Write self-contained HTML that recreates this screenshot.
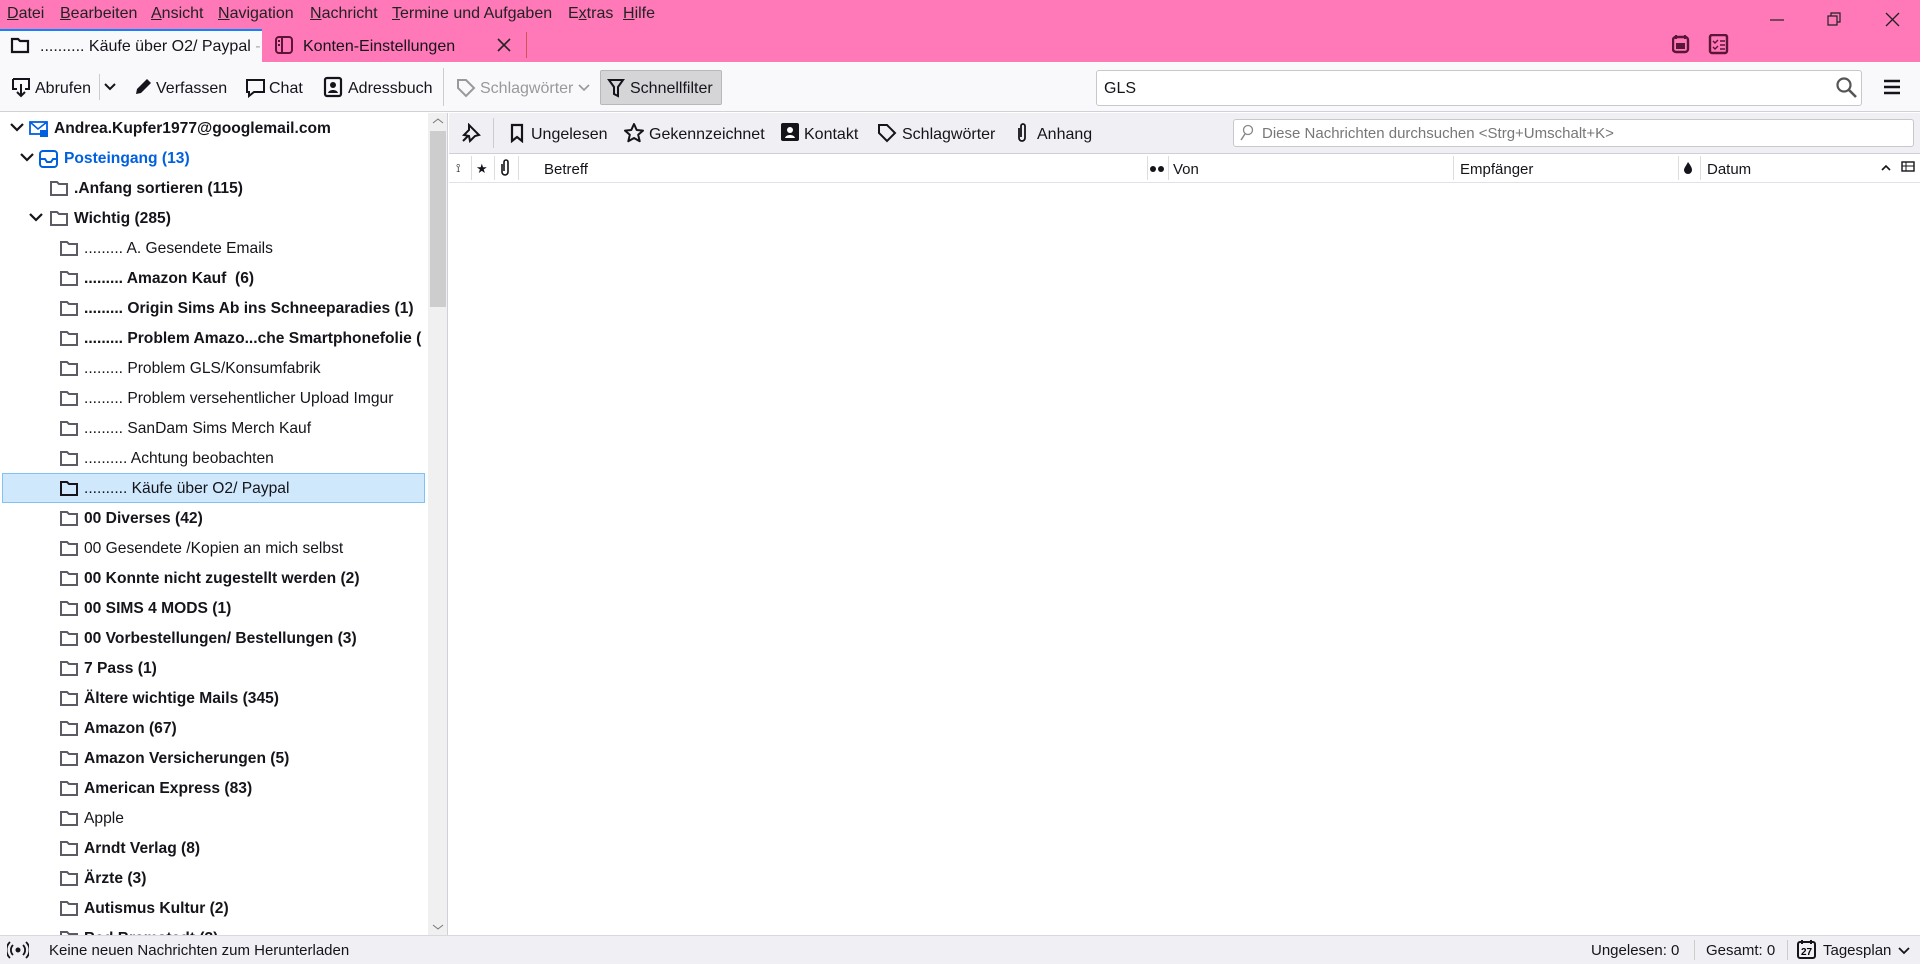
<!DOCTYPE html>
<html><head><meta charset="utf-8"><style>
*{box-sizing:border-box;margin:0;padding:0}
body{width:1920px;height:964px;overflow:hidden;font-family:"Liberation Sans",sans-serif;font-size:15px;color:#15141a;background:#fff;position:relative}
.a{position:absolute;white-space:nowrap}
svg{position:absolute}
#menu{left:0;top:0;width:1920px;height:62px;background:#ff78b8}
.m{top:5px;font-size:16px;color:#222}
.m u{text-decoration:underline}
#tab1{left:0;top:29px;width:262px;height:34px;background:#f9f9fb;border-top:2px solid #0a84ff}
#tb{left:0;top:63px;width:1920px;height:49px;background:#f9f9fb;border-bottom:1px solid #d0d0d7}
.t{top:80px;font-size:16px}
#fp{left:0;top:113px;width:448px;height:822px;background:#fff;border-right:1px solid #d0d0d7;overflow:hidden}
.r{position:absolute;height:30px;line-height:31px;white-space:nowrap;font-size:15.6px}
.b{font-weight:bold}
#qf{left:449px;top:113px;width:1471px;height:41px;background:#f0f0f4;border-bottom:1px solid #cfcfd8}
.q{top:126px;font-size:16px}
#ch{left:449px;top:154px;width:1471px;height:29px;background:#fff;border-bottom:1px solid #e0e0e6}
.c{top:161px;font-size:15px}
#sb{left:0;top:935px;width:1920px;height:29px;background:#f0f0f4;border-top:1px solid #d8d8de}
.s{top:942px;font-size:15px}
</style></head><body>
<div id="menu" class="a"></div>
<div class="a m" style="left:7px"><u>D</u>atei</div>
<div class="a m" style="left:60px"><u>B</u>earbeiten</div>
<div class="a m" style="left:151px"><u>A</u>nsicht</div>
<div class="a m" style="left:218px"><u>N</u>avigation</div>
<div class="a m" style="left:310px"><u>N</u>achricht</div>
<div class="a m" style="left:392px"><u>T</u>ermine und Aufgaben</div>
<div class="a m" style="left:568px">E<u>x</u>tras</div>
<div class="a m" style="left:623px"><u>H</u>ilfe</div>
<svg style="left:1768px;top:12px" width="150" height="16"><path d="M2 8h14" stroke="#222" stroke-width="1.2"/><path d="M60 4h9v9h-9zM63 4v-3h9v9h-3" stroke="#222" fill="none" stroke-width="1.2"/><path d="M118 1l13 13M131 1l-13 13" stroke="#222" stroke-width="1.3"/></svg>
<svg style="left:1672px;top:34px" width="60" height="22"><rect x="1" y="3" width="15" height="15" rx="3" fill="none" stroke="#5a1538" stroke-width="2.4"/><path d="M4 1v4M13 1v4" stroke="#5a1538" stroke-width="2"/><rect x="4" y="9" width="9" height="6" fill="#5a1538"/><rect x="38" y="1" width="17" height="18" rx="2" fill="none" stroke="#5a1538" stroke-width="2.4"/><path d="M41 7l2 2 3-3M41 13l2 2 3-3M48 7h5M48 11h5M48 15h5" stroke="#5a1538" stroke-width="1.4" fill="none"/></svg>
<div id="tab1" class="a"></div>
<svg style="left:10px;top:36px" width="20" height="18"><path d="M2 3h6l2 2h8v11H2z" fill="none" stroke="#15141a" stroke-width="2.2"/></svg>
<div class="a" style="left:40px;top:38px;font-size:16px">.......... Käufe über O2/ Paypal <span style="color:#aaa">-</span></div>
<svg style="left:274px;top:35px" width="20" height="20"><rect x="2" y="2" width="16" height="16" rx="3" fill="none" stroke="#5a1538" stroke-width="2"/><path d="M8 2v16M4 6h2M4 10h2" stroke="#5a1538" stroke-width="2"/></svg>
<div class="a" style="left:303px;top:38px;font-size:16px">Konten-Einstellungen</div>
<svg style="left:497px;top:38px" width="14" height="14"><path d="M1 1l12 12M13 1L1 13" stroke="#222" stroke-width="1.6"/></svg>
<div class="a" style="left:526px;top:32px;width:1px;height:26px;background:#c55"></div>

<div id="tb" class="a"></div>
<svg style="left:10px;top:76px" width="22" height="22"><path d="M3 3h16v10h-4M7 13H3V3M11 8v12M7 16l4 4 4-4" fill="none" stroke="#15141a" stroke-width="2"/></svg>
<div class="a t" style="left:35px">Abrufen</div>
<div class="a" style="left:99px;top:74px;width:1px;height:26px;background:#ccc"></div>
<svg style="left:104px;top:82px" width="12" height="10"><path d="M1 2l5 5 5-5" stroke="#15141a" stroke-width="2" fill="none"/></svg>
<svg style="left:133px;top:77px" width="20" height="20"><path d="M3 17l1-5L14 2l4 4L8 16z" fill="#15141a"/></svg>
<div class="a t" style="left:156px">Verfassen</div>
<svg style="left:245px;top:78px" width="22" height="20"><path d="M2 2h17v12H9l-5 4v-4H2z" fill="none" stroke="#15141a" stroke-width="2"/></svg>
<div class="a t" style="left:269px">Chat</div>
<svg style="left:322px;top:76px" width="22" height="22"><rect x="3" y="2" width="16" height="18" rx="2" fill="none" stroke="#15141a" stroke-width="2.2"/><circle cx="11" cy="9" r="3" fill="#15141a"/><path d="M6 17c1-4 9-4 10 0z" fill="#15141a"/></svg>
<div class="a t" style="left:348px">Adressbuch</div>
<div class="a" style="left:443px;top:68px;width:1px;height:38px;background:#ccc"></div>
<svg style="left:456px;top:78px" width="20" height="20"><path d="M2 2h8l8 8-8 8-8-8z" fill="none" stroke="#999" stroke-width="2"/></svg>
<div class="a t" style="left:480px;color:#999">Schlagwörter</div>
<svg style="left:578px;top:84px" width="12" height="8"><path d="M1 1l5 5 5-5" stroke="#999" stroke-width="1.6" fill="none"/></svg>
<div class="a" style="left:600px;top:70px;width:122px;height:35px;background:#d5d5d8;border:1px solid #b8b8bc;border-radius:2px"></div>
<svg style="left:607px;top:78px" width="18" height="20"><path d="M2 2h14l-5 7v9l-4-2V9z" fill="none" stroke="#15141a" stroke-width="2"/></svg>
<div class="a t" style="left:630px">Schnellfilter</div>
<div class="a" style="left:1096px;top:70px;width:766px;height:36px;background:#fff;border:1px solid #c8c8cc;border-radius:3px"></div>
<div class="a" style="left:1104px;top:80px;font-size:16px">GLS</div>
<svg style="left:1835px;top:76px" width="24" height="24"><circle cx="9" cy="9" r="6.5" fill="none" stroke="#555" stroke-width="2.2"/><path d="M14 14l7 7" stroke="#555" stroke-width="2.6"/></svg>
<svg style="left:1883px;top:78px" width="18" height="18"><path d="M1 3h16M1 9h16M1 15h16" stroke="#15141a" stroke-width="2.4"/></svg>

<div id="fp" class="a">
<div class="r b" style="top:0;left:10px"><svg style="left:0;top:10px" width="14" height="10"><path d="M1 1l6 6 6-6" stroke="#15141a" stroke-width="2.2" fill="none"/></svg><svg style="left:19px;top:6px" width="20" height="20"><rect x="1" y="3" width="17" height="12" fill="none" stroke="#0060df" stroke-width="1.8"/><path d="M1 3l8 7 9-7" stroke="#0060df" fill="none" stroke-width="1.6"/><rect x="11" y="11" width="8" height="7" fill="#0060df"/></svg><span style="position:absolute;left:44px">Andrea.Kupfer1977@googlemail.com</span></div>
<div class="r b" style="top:30px;left:20px;color:#0060df"><svg style="left:0;top:10px" width="14" height="10"><path d="M1 1l6 6 6-6" stroke="#15141a" stroke-width="2.2" fill="none"/></svg><svg style="left:19px;top:6px" width="20" height="20"><rect x="1" y="2" width="17" height="16" rx="3" fill="none" stroke="#0060df" stroke-width="2"/><path d="M1 10h5l2 3h4l2-3h4" stroke="#0060df" fill="none" stroke-width="2"/></svg><span style="position:absolute;left:44px">Posteingang (13)</span></div>
<div class="r b" style="top:60px;left:49px"><svg style="left:0;top:6px" width="20" height="18"><path d="M2 3h6l2 2h8v11H2z" fill="none" stroke="#5b5b66" stroke-width="2"/></svg><span style="position:absolute;left:25px">.Anfang sortieren (115)</span></div>
<div class="r b" style="top:90px;left:29px"><svg style="left:0;top:10px" width="14" height="10"><path d="M1 1l6 6 6-6" stroke="#15141a" stroke-width="2.2" fill="none"/></svg><svg style="left:20px;top:6px" width="20" height="18"><path d="M2 3h6l2 2h8v11H2z" fill="none" stroke="#5b5b66" stroke-width="2"/></svg><span style="position:absolute;left:45px">Wichtig (285)</span></div>
<div class="a" style="left:2px;top:360px;width:423px;height:30px;background:#cfe8fc;border:1px solid #83c1f5"></div>
<div id="items"></div>
<div class="a" style="left:428px;top:0;width:20px;height:822px;background:#f0f0f0"></div>
<div class="a" style="left:430px;top:18px;width:16px;height:176px;background:#cdcdcd"></div>
<svg style="left:432px;top:4px" width="12" height="8"><path d="M1 6l5-4 5 4" stroke="#777" fill="none"/></svg>
<svg style="left:432px;top:810px" width="12" height="8"><path d="M1 2l5 4 5-4" stroke="#777" fill="none"/></svg>
</div>
<script>
var L=[["......... A. Gesendete Emails",0],["......... Amazon Kauf&nbsp; (6)",1],["......... Origin Sims Ab ins Schneeparadies (1)",1],["......... Problem Amazo...che Smartphonefolie (",1],["......... Problem GLS/Konsumfabrik",0],["......... Problem versehentlicher Upload Imgur",0],["......... SanDam Sims Merch Kauf",0],[".......... Achtung beobachten",0],[".......... Käufe über O2/ Paypal",0],["00 Diverses (42)",1],["00 Gesendete /Kopien an mich selbst",0],["00 Konnte nicht zugestellt werden (2)",1],["00 SIMS 4 MODS (1)",1],["00 Vorbestellungen/ Bestellungen (3)",1],["7 Pass (1)",1],["Ältere wichtige Mails (345)",1],["Amazon (67)",1],["Amazon Versicherungen (5)",1],["American Express (83)",1],["Apple",0],["Arndt Verlag (8)",1],["Ärzte (3)",1],["Autismus Kultur (2)",1],["Bad Bramstedt (3)",1]];
var h="";L.forEach(function(x,i){var sel=i==8;h+='<div class="r'+(x[1]?' b':'')+'" style="top:'+(120+30*i)+'px;left:59px"><svg style="left:0;top:6px" width="20" height="18"><path d="M2 3h6l2 2h8v11H2z" fill="none" stroke="'+(sel?'#15141a':'#5b5b66')+'" stroke-width="2"/></svg><span style="position:absolute;left:25px">'+x[0]+'</span></div>';});
document.getElementById("items").outerHTML=h;
</script>

<div id="qf" class="a"></div>
<svg style="left:461px;top:123px" width="20" height="20"><path d="M8 2l10 10-4 1-5 5-1-5-5-1 5-5zM2 18l5-5" fill="none" stroke="#15141a" stroke-width="2"/></svg>
<div class="a" style="left:493px;top:118px;width:1px;height:30px;background:#ccc"></div>
<svg style="left:510px;top:123px" width="14" height="20"><path d="M2 2h10v16l-5-4-5 4z" fill="none" stroke="#15141a" stroke-width="2.2"/></svg>
<div class="a q" style="left:531px">Ungelesen</div>
<svg style="left:623px;top:122px" width="22" height="22"><path d="M11 2l2.7 6 6.3.6-4.8 4.2 1.5 6.4L11 16l-5.7 3.2 1.5-6.4L2 8.6 8.3 8z" fill="none" stroke="#15141a" stroke-width="2" stroke-linejoin="round"/></svg>
<div class="a q" style="left:649px">Gekennzeichnet</div>
<svg style="left:780px;top:122px" width="20" height="20"><rect x="1" y="1" width="18" height="18" rx="2" fill="#15141a"/><circle cx="10" cy="8" r="3" fill="#fff"/><path d="M5 16c1-4 9-4 10 0z" fill="#fff"/></svg>
<div class="a q" style="left:804px">Kontakt</div>
<svg style="left:877px;top:123px" width="20" height="20"><path d="M2 2h8l8 8-8 8-8-8z" fill="none" stroke="#15141a" stroke-width="2"/></svg>
<div class="a q" style="left:902px">Schlagwörter</div>
<svg style="left:1015px;top:122px" width="14" height="22"><path d="M4 6v10a3 3 0 006 0V4a2 2 0 00-4 0v11" fill="none" stroke="#15141a" stroke-width="1.8"/></svg>
<div class="a q" style="left:1037px">Anhang</div>
<div class="a" style="left:1233px;top:119px;width:681px;height:28px;background:#fff;border:1px solid #c8c8cc;border-radius:3px"></div>
<svg style="left:1239px;top:124px" width="16" height="18"><circle cx="9" cy="6" r="4.5" fill="none" stroke="#888" stroke-width="1.3"/><path d="M6 10l-4 6" stroke="#888" stroke-width="1.5"/></svg>
<div class="a" style="left:1262px;top:125px;font-size:15px;color:#777">Diese Nachrichten durchsuchen &lt;Strg+Umschalt+K&gt;</div>

<div id="ch" class="a"></div>
<div class="a c" style="left:456px;font-size:12px;top:161px">⟟</div>
<div class="a c" style="left:476px;font-size:13px">★</div>
<svg style="left:499px;top:159px" width="12" height="18"><path d="M3 5v8a3 3 0 006 0V3a2 2 0 00-4 0v9" fill="none" stroke="#15141a" stroke-width="1.6"/></svg>
<div class="a" style="left:471px;top:156px;width:1px;height:24px;background:#ddd"></div>
<div class="a" style="left:494px;top:156px;width:1px;height:24px;background:#ddd"></div>
<div class="a" style="left:518px;top:156px;width:1px;height:24px;background:#ddd"></div>
<div class="a c" style="left:544px">Betreff</div>
<div class="a" style="left:1147px;top:156px;width:1px;height:24px;background:#ddd"></div>
<svg style="left:1149px;top:165px" width="16" height="8"><circle cx="4" cy="4" r="3" fill="#15141a"/><circle cx="12" cy="4" r="3" fill="#15141a"/></svg>
<div class="a" style="left:1168px;top:156px;width:1px;height:24px;background:#ddd"></div>
<div class="a c" style="left:1173px">Von</div>
<div class="a" style="left:1453px;top:156px;width:1px;height:24px;background:#ddd"></div>
<div class="a c" style="left:1460px">Empfänger</div>
<div class="a" style="left:1678px;top:156px;width:1px;height:24px;background:#ddd"></div>
<svg style="left:1683px;top:161px" width="10" height="14"><path d="M5 1c3 4 4 6 4 8a4 4 0 01-8 0c0-2 2-4 4-8z" fill="#15141a"/></svg>
<div class="a" style="left:1700px;top:156px;width:1px;height:24px;background:#ddd"></div>
<div class="a c" style="left:1707px">Datum</div>
<svg style="left:1881px;top:164px" width="10" height="8"><path d="M1 6l4-4 4 4" stroke="#15141a" stroke-width="1.6" fill="none"/></svg>
<svg style="left:1901px;top:161px" width="14" height="14"><rect x="1" y="1" width="12" height="9" fill="none" stroke="#15141a" stroke-width="1.4"/><path d="M1 5h12M5 1v9" stroke="#15141a"/></svg>

<div id="sb" class="a"></div>
<svg style="left:7px;top:941px" width="22" height="18"><circle cx="11" cy="9" r="2.5" fill="#15141a"/><path d="M6 4a7 7 0 000 10M16 4a7 7 0 010 10M3 1a11 11 0 000 16M19 1a11 11 0 010 16" fill="none" stroke="#15141a" stroke-width="1.8"/></svg>
<div class="a s" style="left:49px">Keine neuen Nachrichten zum Herunterladen</div>
<div class="a s" style="left:1591px">Ungelesen: 0</div>
<div class="a" style="left:1694px;top:940px;width:1px;height:20px;background:#ccc"></div>
<div class="a s" style="left:1706px">Gesamt: 0</div>
<div class="a" style="left:1787px;top:940px;width:1px;height:20px;background:#ccc"></div>
<svg style="left:1797px;top:939px" width="20" height="20"><rect x="1" y="3" width="17" height="16" rx="2" fill="none" stroke="#15141a" stroke-width="2"/><path d="M5 1v4M14 1v4" stroke="#15141a" stroke-width="2"/><text x="4" y="16" font-size="10" font-family="Liberation Sans" font-weight="bold">27</text></svg>
<div class="a s" style="left:1823px">Tagesplan</div>
<svg style="left:1898px;top:947px" width="12" height="8"><path d="M1 1l5 5 5-5" stroke="#15141a" stroke-width="1.8" fill="none"/></svg>
</body></html>
